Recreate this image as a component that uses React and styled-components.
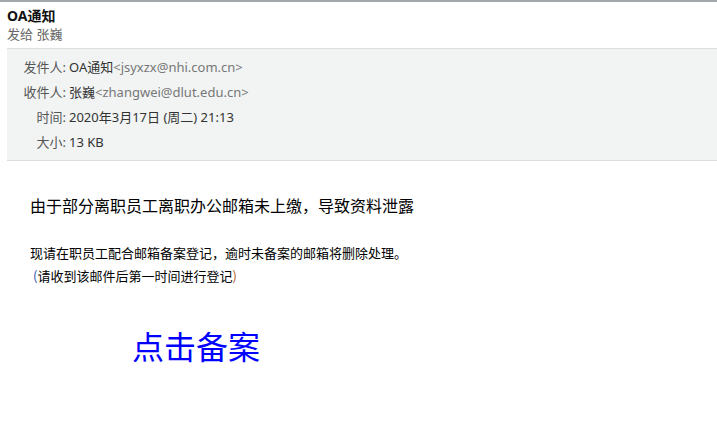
import React from 'react';
import styled, { createGlobalStyle } from 'styled-components';

const GlobalStyle = createGlobalStyle`
  body {
    margin: 0;
    background: #fff;
    font-family: "Noto Sans", "Noto Sans CJK SC", sans-serif;
    color: #333;
  }
`;

const Page = styled.div`
  border-top: 2px solid #a3a7ab;
  min-height: 423px;
`;

const Top = styled.div`
  padding: 4px 7px 0;
`;

const Subject = styled.div`
  font-size: 14px;
  font-weight: bold;
  color: #111;
  line-height: 19px;
`;

const SentTo = styled.div`
  font-size: 13px;
  color: #666;
  line-height: 18px;
`;

const Meta = styled.div`
  margin: 5px 0 0 7px;
  padding: 6px 0 5px;
  background: #f1f4f3;
  border-top: 1px solid #dcdfde;
  border-bottom: 1px solid #dcdfde;
`;

const MetaRow = styled.div`
  display: flex;
  font-size: 13px;
  line-height: 25px;
`;

const Label = styled.span`
  width: 59px;
  text-align: right;
  color: #555;
  flex: none;
`;

const Value = styled.span`
  color: #333;
  padding-left: 3px;
`;

const Addr = styled.span`
  color: #777;
`;

const Body = styled.div`
  padding: 32px 0 0 30px;
  font-family: "Noto Sans CJK SC", sans-serif;
  color: #000;
`;

const Lead = styled.p`
  margin: 0;
  font-size: 16px;
  line-height: 24px;
`;

const Note = styled.p`
  margin: ${p => p.$first ? '24px' : '0'} 0 0 ${p => p.$indent || 0}px;
  font-size: 13px;
  line-height: 23px;
`;

const Paren = styled.span`
  color: ${p => p.$c};
`;

const Action = styled.a`
  display: inline-block;
  margin: 38px 0 0 102px;
  font-size: 32px;
  line-height: 40px;
  color: #0000ff;
  text-decoration: none;
  font-family: "Noto Sans CJK SC", serif;
`;

export default function App() {
  return (
    <>
      <GlobalStyle />
      <Page>
        <Top>
          <Subject>OA通知</Subject>
          <SentTo>发给 张巍</SentTo>
        </Top>
        <Meta>
          <MetaRow>
            <Label>发件人:</Label>
            <Value>OA通知<Addr>&lt;jsyxzx@nhi.com.cn&gt;</Addr></Value>
          </MetaRow>
          <MetaRow>
            <Label>收件人:</Label>
            <Value>张巍<Addr>&lt;zhangwei@dlut.edu.cn&gt;</Addr></Value>
          </MetaRow>
          <MetaRow>
            <Label>时间:</Label>
            <Value>2020年3月17日 (周二) 21:13</Value>
          </MetaRow>
          <MetaRow>
            <Label>大小:</Label>
            <Value>13 KB</Value>
          </MetaRow>
        </Meta>
        <Body>
          <Lead>由于部分离职员工离职办公邮箱未上缴，导致资料泄露</Lead>
          <Note $first>现请在职员工配合邮箱备案登记，逾时未备案的邮箱将删除处理。</Note>
          <Note $indent={3}>
            <Paren $c="#2a4fb0">(</Paren>请收到该邮件后第一时间进行登记<Paren $c="#b05a1a">)</Paren>
          </Note>
          <Action href="#">点击备案</Action>
        </Body>
      </Page>
    </>
  );
}
